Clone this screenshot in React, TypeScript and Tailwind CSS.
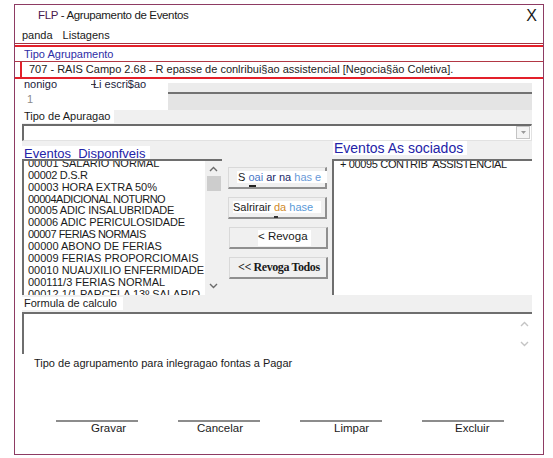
import React from "react";

const sans = { fontFamily: '"Liberation Sans", Arial, sans-serif' };

const eventos = [
  { t: "00001 SALARIO NORMAL", c: "" },
  { t: "00002 D.S.R", c: "tracking-[-0.3px]" },
  { t: "00003 HORA EXTRA 50%", c: "" },
  { t: "00004ADICIONAL NOTURNO", c: "tracking-[-0.5px]" },
  { t: "00005 ADIC INSALUBRIDADE", c: "tracking-[-0.2px]" },
  { t: "00006 ADIC PERICULOSIDADE", c: "tracking-[-0.1px]" },
  { t: "00007 FERIAS NORMAIS", c: "tracking-[-0.5px]" },
  { t: "00000 ABONO DE FERIAS", c: "" },
  { t: "00009 FERIAS PROPORCIOMAIS", c: "" },
  { t: "00010 NUAUXILIO ENFERMIDADE", c: "" },
  { t: "000111/3 FERIAS NORMAL", c: "" },
  { t: "00012 1/1 PARCELA 13º SALARIO", c: "" },
];

function Chevron({ up, color = "#6b6b6b" }: { up?: boolean; color?: string }) {
  return (
    <svg width="9" height="6" viewBox="0 0 9 6">
      <polyline
        points={up ? "1,5 4.5,1.5 8,5" : "1,1 4.5,4.5 8,1"}
        fill="none"
        stroke={color}
        strokeWidth="1.4"
      />
    </svg>
  );
}

function RaisedButton({ children, className = "" }: { children: React.ReactNode; className?: string }) {
  return (
    <div
      className={`flex h-[22px] w-[99px] items-center whitespace-nowrap border border-[#d9d9d9] border-b-2 border-r-2 border-b-[#8f8f8f] border-r-[#8f8f8f] bg-[#f0f0f0] ${className}`}
    >
      {children}
    </div>
  );
}

export default function App() {
  return (
    <div className="min-h-[458px] bg-white pt-[4px] text-[#1a1a1a]" style={sans}>
      <div className="ml-[14px] flex h-[451px] w-[530px] flex-col border border-[#8e3b63] bg-white">
        {/* title */}
        <div className="flex h-[22px] items-center justify-between pl-[23px] pr-[6px]">
          <span className="text-[11.5px] tracking-[-0.35px]">
            <span className="text-[#4a1b4e]">FLP</span> - Agrupamento de Eventos
          </span>
          <span className="text-[16px] leading-none">X</span>
        </div>
        {/* menu */}
        <div className="flex h-[16px] items-center gap-[10px] pl-[7px] text-[11px]">
          <span>panda</span>
          <span>Listagens</span>
        </div>
        <div className="h-px bg-[#a8313f]" />
        <div className="h-px bg-white" />
        <div className="h-[2px] bg-[#e3202a]" />
        <div className="flex h-[14px] items-center pl-[9px] text-[11px] text-[#2d2da6]">Tipo Agrupamento</div>
        <div className="h-px bg-[#b23744]" />
        <div className="ml-[5px] flex h-[15px] items-center border-l-2 border-[#e3202a] pl-[7px] text-[11px] text-[#222]">
          707 - RAIS Campo 2.68 - R epasse de conlribui§ao assistencial [Negocia§äo Coletiva].
        </div>
        <div className="h-[2px] bg-[#e3202a]" />

        {/* codigo / descricao */}
        <div className="flex h-[31px]">
          <div className="ml-[7px] flex w-[146px] flex-col bg-white text-[11px] leading-[11px]">
            <div className="flex pl-[2px]">
              <span className="w-[67px] text-[#1c1c3c]">nonigo</span>
              <span className="flex items-center text-[#1c1c3c]">
                <span className="-mr-[3px] inline-block h-px w-[5px] bg-[#444]" />
                Li escri$ao
              </span>
            </div>
            <div className="mt-[4px] pl-[5px] text-[#8a8a8a]">1</div>
          </div>
          <div className="mt-[4px] flex w-[364px] flex-col">
            <div className="h-[9px] bg-[#ececec]" />
            <div className="h-[2px] bg-[#727272]" />
            <div className="flex-1 bg-[#e4e4e4]" />
          </div>
        </div>

        {/* gray panel */}
        <div className="ml-[7px] flex h-[244px] w-[510px] flex-col bg-[#f0f0f0]">
          <div className="flex h-[13px] items-center">
            <span className="bg-white pl-[2px] pr-[4px] text-[11px] leading-[13px]">Tipo de Apuragao</span>
          </div>
          <div className="mt-[1px] flex h-[17px] items-center justify-end border-l-2 border-t-2 border-[#6b6b6b] border-b border-r border-b-[#e2e2e2] border-r-[#e2e2e2] bg-white pr-[1px]">
            <div className="flex h-[13px] w-[14px] items-center justify-center border border-[#c4c4c4] bg-[#f4f4f4]">
              <svg width="5" height="3" viewBox="0 0 5 3">
                <polygon points="0,0 5,0 2.5,3" fill="#9a9a9a" />
              </svg>
            </div>
          </div>
          <div className="flex h-[18px] items-start">
            <span className="w-[311px]">
              <span className="bg-white pl-[2px] pr-[5px] text-[13px] leading-[14px] text-[#2323a8]">
                Eventos&nbsp; Disponfveis
              </span>
            </span>
            <span className="bg-white pl-[1px] pr-[4px] text-[14px] leading-[14px] text-[#2323a8]">Eventos As sociados</span>
          </div>

          <div className="flex h-[136px]">
            {/* left list */}
            <div className="flex w-[200px] overflow-hidden border-l-2 border-t-2 border-[#6e6e6e] bg-white">
              <div className="flex-1 overflow-hidden pl-[4px]">
                <div className="-mt-[3px] text-[11px] leading-[11.9px]">
                  {eventos.map((e) => (
                    <div key={e.t} className={`whitespace-nowrap ${e.c}`}>
                      {e.t}
                    </div>
                  ))}
                </div>
              </div>
              <div className="flex w-[17px] flex-col items-center bg-[#f0f0f0]">
                <div className="mt-[4px] flex h-[9px] items-center">
                  <Chevron up />
                </div>
                <div className="mt-[2px] h-[15px] w-[14px] bg-[#cdcdcd]" />
                <div className="flex-1" />
                <div className="mb-[4px] flex h-[9px] items-center">
                  <Chevron />
                </div>
              </div>
            </div>

            {/* buttons */}
            <div className="ml-[6px] flex w-[100px] flex-col gap-[8px] pt-[8px]">
              <RaisedButton className="pl-[8px]">
                <span className="relative bg-white pl-[1px] pr-[6px] text-[11px] leading-[12px]">
                  S <span className="text-[#4a78c8]">oai</span> <span className="text-[#1a2a6a]">ar na</span>{" "}
                  <span className="text-[#6a9ad8]">has e</span>
                  <span className="absolute left-[12px] top-[14px] h-[2px] w-[7px] bg-[#222]" />
                </span>
              </RaisedButton>
              <RaisedButton className="pl-[4px]">
                <span className="relative bg-white pr-[8px] text-[11px] leading-[12px]">
                  Salrirair <span className="text-[#d08a2a]">da</span> <span className="text-[#5a9ad8]">hase</span>
                  <span className="absolute left-[41px] top-[15px] h-[2px] w-[4px] bg-[#333]" />
                </span>
              </RaisedButton>
              <RaisedButton className="ml-[1px] items-start pl-[28px] pt-[2px]">
                <span className="bg-white pb-[4px] pr-[3px] text-[11.5px] leading-[12px]">&lt; Revoga</span>
              </RaisedButton>
              <RaisedButton className="ml-[1px] pl-[8px]">
                <span
                  className="text-[12px] font-bold tracking-[-0.4px]"
                  style={{ fontFamily: '"Liberation Serif", "Times New Roman", serif' }}
                >
                  &lt;&lt; Revoga Todos
                </span>
              </RaisedButton>
            </div>

            {/* right list */}
            <div className="ml-[4px] w-[200px] overflow-hidden border-l-2 border-t-2 border-[#6e6e6e] bg-white pl-[6px]">
              <div className="-mt-[3px] whitespace-nowrap text-[11px] leading-[12px] tracking-[-0.35px]">
                + 00095 CONTRIB&nbsp; ASSISTENCIAL
              </div>
            </div>
          </div>

          <div className="flex h-[17px] items-center">
            <span className="bg-white pl-[2px] pr-[6px] text-[11px] leading-[13px]">Formula de calculo</span>
          </div>
          <div className="flex h-[43px] justify-end border-l-2 border-t-2 border-[#6e6e6e] bg-white">
            <div className="flex w-[16px] flex-col items-center justify-between py-[7px]">
              <Chevron up color="#c4c4c4" />
              <Chevron color="#c4c4c4" />
            </div>
          </div>
        </div>

        <div className="mt-[3px] pl-[19px] text-[11px] leading-[12px]">
          Tipo de agrupamento para inlegragao fontas a Pagar
        </div>

        {/* bottom buttons */}
        <div className="mt-[51px] flex gap-[40px] pl-[41px] text-[11.5px] leading-[10px]">
          {[
            { t: "Gravar", p: "pl-[35px]" },
            { t: "Cancelar", p: "pl-[19px]" },
            { t: "Limpar", p: "pl-[34px]" },
            { t: "Excluir", p: "pl-[33px]" },
          ].map((b) => (
            <div key={b.t} className="w-[82px]">
              <div className="h-[2px] bg-[#8c8c8c]" />
              <div className={`mt-[1px] ${b.p}`}>{b.t}</div>
            </div>
          ))}
        </div>
      </div>
    </div>
  );
}
